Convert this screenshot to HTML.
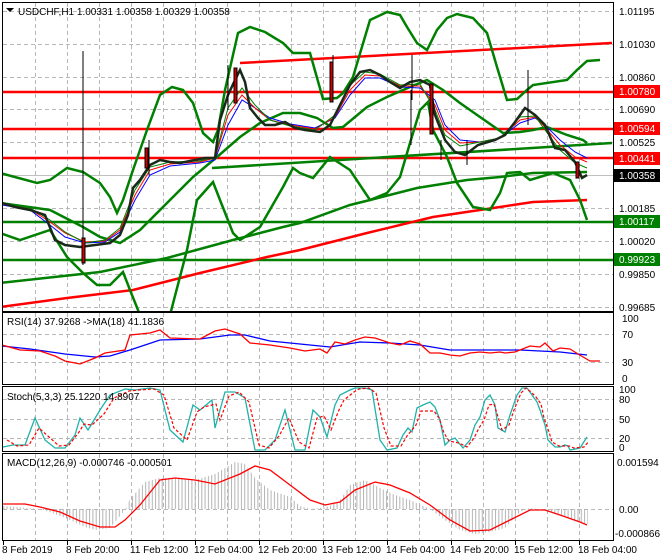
<!DOCTYPE html>
<html><head><meta charset="utf-8"><style>
html,body{margin:0;padding:0;background:#fff;width:660px;height:560px;overflow:hidden}
svg{display:block;font-family:"Liberation Sans",sans-serif;font-size:10px}
</style></head><body>
<svg width="660" height="560" viewBox="0 0 660 560" xmlns="http://www.w3.org/2000/svg">
<defs>
<pattern id="hist" width="3.3" height="10" patternUnits="userSpaceOnUse"><rect x="0" y="0" width="1" height="10" fill="#b4b4b4"/></pattern>
<clipPath id="cm"><rect x="3" y="3" width="610" height="308"/></clipPath>
</defs>
<rect width="660" height="560" fill="#fff"/>
<g stroke="#b8b8b8" stroke-dasharray="4,3" stroke-width="1">
<path d="M35.5 3V311M67.5 3V311M99.5 3V311M131.5 3V311M163.5 3V311M195.5 3V311M227.5 3V311M259.5 3V311M291.5 3V311M323.5 3V311M355.5 3V311M387.5 3V311M419.5 3V311M451.5 3V311M483.5 3V311M515.5 3V311M547.5 3V311M579.5 3V311"/>
<path d="M35.5 313V384M67.5 313V384M99.5 313V384M131.5 313V384M163.5 313V384M195.5 313V384M227.5 313V384M259.5 313V384M291.5 313V384M323.5 313V384M355.5 313V384M387.5 313V384M419.5 313V384M451.5 313V384M483.5 313V384M515.5 313V384M547.5 313V384M579.5 313V384"/>
<path d="M35.5 387V451M67.5 387V451M99.5 387V451M131.5 387V451M163.5 387V451M195.5 387V451M227.5 387V451M259.5 387V451M291.5 387V451M323.5 387V451M355.5 387V451M387.5 387V451M419.5 387V451M451.5 387V451M483.5 387V451M515.5 387V451M547.5 387V451M579.5 387V451"/>
<path d="M35.5 454V540M67.5 454V540M99.5 454V540M131.5 454V540M163.5 454V540M195.5 454V540M227.5 454V540M259.5 454V540M291.5 454V540M323.5 454V540M355.5 454V540M387.5 454V540M419.5 454V540M451.5 454V540M483.5 454V540M515.5 454V540M547.5 454V540M579.5 454V540"/>
<path d="M3 11.5H613M3 44.5H613M3 77.5H613M3 109.5H613M3 142.5H613M3 208.5H613M3 241.5H613M3 274.5H613M3 307.5H613"/>
<path d="M3 334.5H613M3 362.5H613M3 399.5H613M3 419.5H613M3 438.5H613M3 509.5H613"/>
</g>
<line x1="3" y1="175.5" x2="613" y2="175.5" stroke="#c0c0c0"/>
<g clip-path="url(#cm)" fill="none">
<path d="M3 92H613M3 129H613M3 158H613" stroke="#f00" stroke-width="2.5"/>
<path d="M3 222H613M3 260H613" stroke="#008000" stroke-width="2.5"/>
<path d="M240 63L612 43" stroke="#f00" stroke-width="2.5"/>
<path d="M212 168L612 143" stroke="#008000" stroke-width="2.5"/>
<path d="M0 283L100 272L167 258L233 240L283 227L300 223L350 205L370 200L417 188L467 180L500 177L533 173L587 172" stroke="#008000" stroke-width="2.5"/>
<path d="M0 307L67 298L133 290L200 273L267 257L300 250L367 233L433 217L500 207L533 202L587 200" stroke="#f00" stroke-width="2.5"/>
<path d="M0 173L37 183L50 180L67 168L83 172L100 183L110 197L117 213L123 200L133 170L147 130L160 95L172 87L183 90L193 103L203 133L213 142L218 130L225 90L238 33L250 27L265 32L283 43L293 53L300 53L310 53L323 99L337 98L343 93L353 77L370 20L387 12L400 15L407 27L417 43L427 50L437 30L447 18L457 14L473 18L487 33L497 67L507 100L517 99L527 90L533 85L567 80L577 70L587 61L600 60" stroke="#008000" stroke-width="2.5"/>
<path d="M0 233L20 240L50 230L67 257L83 273L97 285L110 285L123 272L130 290L140 315M170 315L187 250L197 200L213 182L220 200L233 233L240 240L260 227L283 187L293 168L300 173L313 178L330 157L350 170L370 200L387 193L400 177L410 143L420 110L428 102L433 130L447 157L457 183L473 207L490 210L500 193L507 173L520 172L530 180L553 173L570 180L580 200L587 220" stroke="#008000" stroke-width="2.5"/>
<path d="M0 203L50 210L83 227L100 237L120 243L140 230L167 203L193 177L217 157L240 137L260 123L283 113L300 113L317 118L333 128L343 127L367 107L387 97L410 87L427 80L443 90L460 103L480 117L503 133L520 132L533 130L547 127L567 135L583 140L587 143" stroke="#008000" stroke-width="2.5"/>
<path d="M2 205L30 210L50 225L65 237L85 243L105 242L120 232L135 200L150 175L170 166L200 163L215 160L228 125L242 100L255 108L270 118L290 124L315 128L335 118L350 95L365 78L380 78L400 87L420 88L435 100L445 125L460 140L480 142L500 138L520 123L535 118L545 125L560 140L575 152L587 158" stroke="#00f" stroke-width="1"/>
<path d="M2 204L30 209L50 222L65 233L85 242L105 241L120 230L135 195L150 170L170 164L200 162L215 158L228 115L242 95L255 108L270 120L290 125L315 129L335 117L350 90L365 75L380 76L400 86L420 86L435 105L445 130L460 143L480 142L500 138L520 120L535 117L545 127L560 145L575 157L587 162" stroke="#f00" stroke-width="1"/>
<path d="M2 203L30 208L50 220L65 232L85 243L105 240L120 228L135 190L150 167L170 162L200 161L215 157L228 108L242 88L255 105L270 120L290 126L315 130L335 115L350 85L365 72L380 74L400 85L420 84L435 110L445 135L460 146L480 142L500 138L520 117L535 116L545 130L560 150L575 163L587 168" stroke="#008000" stroke-width="1"/>
<path d="M83 51V265" stroke="#000" stroke-width="1"/>
<path d="M2 203L15 207L30 210L45 215L55 240L65 245L80 247L95 245L110 243L120 235L128 215L133 188L140 180L150 165L160 160L170 162L180 163L195 160L205 158L215 158L220 120L228 95L235 80L240 70L245 82L250 108L258 118L265 125L275 125L285 122L295 128L305 130L320 132L330 125L340 105L350 85L360 72L370 70L380 75L390 82L400 88L410 82L420 80L430 85L435 115L445 140L455 152L465 155L478 145L495 140L505 135L515 122L525 108L535 115L545 125L555 148L565 150L575 162L582 178L587 175" stroke="#1a2a1a" stroke-width="2.5"/>
<path d="M149 140V175M228 65V110M412 55V100M411 90V145M528 70V125M467 140V165M333 55V100M441 140V160" stroke="#000" stroke-width="1"/>
<path d="M82 238h3v25h-3zM145 148h3v20h-3zM234 68h3v35h-3zM330 62h3v40h-3zM430 84h3v50h-3zM576 162h3v16h-3z" fill="#c00" stroke="#000" stroke-width="1"/>
</g>
<path d="M2 346L30 349L65 354L95 357L110 356L130 350L160 340L200 339L230 335L245 335L270 341L300 344L330 347L360 342L390 343L420 345L450 350L480 350L520 350L560 352L587 355" fill="none" stroke="#00f" stroke-width="1.3"/>
<path d="M2 345L20 350L40 351L55 356L65 361L80 364L95 358L105 353L125 350L130 335L150 333L160 330L170 338L200 339L215 331L225 329L240 334L250 343L270 345L290 348L305 351L320 349L327 353L335 342L345 344L355 340L365 337L375 338L390 343L400 345L410 341L420 344L430 353L440 353L450 355L460 356L470 353L480 352L490 353L500 352L505 353L515 352L530 346L540 347L545 343L553 351L560 348L570 349L578 354L590 361L600 361" fill="none" stroke="#f00" stroke-width="1.3"/>
<path d="M3 447L13 445L25 445L35 418L45 440L55 448L65 448L75 435L80 418L88 430L100 410L110 395L125 389L135 390L150 388L160 390L170 430L183 442L193 405L200 410L212 400L215 428L225 392L235 392L245 398L255 450L265 450L275 440L285 410L295 450L305 450L313 410L320 417L327 437L335 405L340 395L350 390L355 388L365 388L372 390L380 440L387 450L397 448L403 435L408 428L412 432L417 408L423 405L430 402L435 407L440 420L445 445L450 440L455 438L463 448L470 440L475 425L480 417L485 400L490 395L495 405L498 428L505 432L510 415L517 395L522 388L527 388L532 395L537 402L540 410L545 425L548 440L555 447L560 447L565 445L568 446L570 450L580 448L587 437" fill="none" stroke="#20b2aa" stroke-width="1.3"/>
<path d="M7 440L17 446L29 445L39 428L49 437L59 446L69 445L79 432L84 424L92 425L104 414L114 398L129 391L139 390L154 389L164 395L174 428L187 440L197 412L204 407L216 404L220 420L229 396L239 392L249 402L259 445L269 448L279 436L289 418L299 442L309 448L317 418L324 416L331 430L339 410L344 400L354 392L359 389L369 388L376 393L384 428L391 446L401 446L407 436L412 430L416 425L421 411L427 411L434 411L439 418L444 433L449 441L459 443L467 447L474 438L479 428L484 420L489 405L494 404L499 420L502 430L509 425L514 410L521 393L526 388L531 392L536 397L541 404L544 418L549 432L552 442L559 446L564 446L569 446L574 448L584 447L589 441" fill="none" stroke="#f00" stroke-width="1.2" stroke-dasharray="3,2"/>
<path d="M2 509L2 506L40 509L50 512L70 520L85 527L95 530L110 528L125 510L130 499L145 482L160 478L180 478L195 480L215 474L235 462L245 464L255 478L270 490L290 497L300 506L310 509L320 508L330 506L340 500L350 485L365 480L380 488L395 495L410 500L430 509L445 520L460 530L475 534L490 532L505 528L520 512L530 508L545 510L560 515L575 520L588 524L588 509Z" fill="url(#hist)"/>
<path d="M2 504L25 504L40 507L60 512L80 521L100 527L115 527L125 520L140 505L160 480L175 478L195 480L215 484L240 474L255 466L270 470L290 485L310 500L325 505L340 502L355 490L375 482L390 485L410 493L430 505L450 520L470 531L490 530L510 520L530 510L545 510L560 515L580 522L587 525" fill="none" stroke="#f00" stroke-width="1.3"/>
<g fill="none" stroke="#000" stroke-width="1">
<rect x="2.5" y="2.5" width="611" height="309"/>
<rect x="2.5" y="312.5" width="611" height="72"/>
<rect x="2.5" y="386.5" width="611" height="65"/>
<rect x="2.5" y="453.5" width="611" height="87"/>
</g>
<path d="M3.5 541v4M67.5 541v4M131.5 541v4M195.5 541v4M259.5 541v4M323.5 541v4M387.5 541v4M451.5 541v4M515.5 541v4M579.5 541v4" stroke="#000"/>
<g fill="#000">
<path d="M6 8h8l-4 4z"/>
<text x="18" y="15">USDCHF,H1  1.00331 1.00358 1.00329 1.00358</text>
<text x="7" y="325">RSI(14) 37.9268  -&gt;MA(18) 41.1836</text>
<text x="7" y="400">Stoch(5,3,3) 25.1220 14.8907</text>
<text x="7" y="466">MACD(12,26,9) -0.000746 -0.000501</text>
<text x="2" y="553">8 Feb 2019</text>
<text x="66" y="553">8 Feb 20:00</text>
<text x="130" y="553">11 Feb 12:00</text>
<text x="194" y="553">12 Feb 04:00</text>
<text x="258" y="553">12 Feb 20:00</text>
<text x="322" y="553">13 Feb 12:00</text>
<text x="386" y="553">14 Feb 04:00</text>
<text x="450" y="553">14 Feb 20:00</text>
<text x="514" y="553">15 Feb 12:00</text>
<text x="578" y="553">18 Feb 04:00</text>
<text x="619" y="15">1.01195</text>
<text x="619" y="48">1.01030</text>
<text x="619" y="81">1.00860</text>
<text x="619" y="113">1.00690</text>
<text x="619" y="146">1.00525</text>
<text x="619" y="212">1.00185</text>
<text x="619" y="245">1.00020</text>
<text x="619" y="278">0.99850</text>
<text x="619" y="311">0.99685</text>
<text x="622" y="322">100</text>
<text x="622" y="338">70</text>
<text x="622" y="366">30</text>
<text x="622" y="382">0</text>
<text x="619" y="393">100</text>
<text x="619" y="403">80</text>
<text x="619" y="423">50</text>
<text x="619" y="442">20</text>
<text x="619" y="451">0</text>
<text x="617" y="466">0.001594</text>
<text x="619" y="513">0.00</text>
<text x="615" y="537">-0.000866</text>
</g>
<rect x="614" y="85" width="46" height="13" fill="#f00"/>
<rect x="614" y="122" width="46" height="13" fill="#f00"/>
<rect x="614" y="152" width="46" height="13" fill="#f00"/>
<rect x="614" y="169" width="46" height="13" fill="#000"/>
<rect x="614" y="215" width="46" height="13" fill="#008000"/>
<rect x="614" y="253" width="46" height="13" fill="#008000"/>
<g fill="#fff">
<text x="619" y="95">1.00780</text>
<text x="619" y="132">1.00594</text>
<text x="619" y="162">1.00441</text>
<text x="619" y="179">1.00358</text>
<text x="619" y="225">1.00117</text>
<text x="619" y="263">0.99923</text>
</g>
</svg>
</body></html>
